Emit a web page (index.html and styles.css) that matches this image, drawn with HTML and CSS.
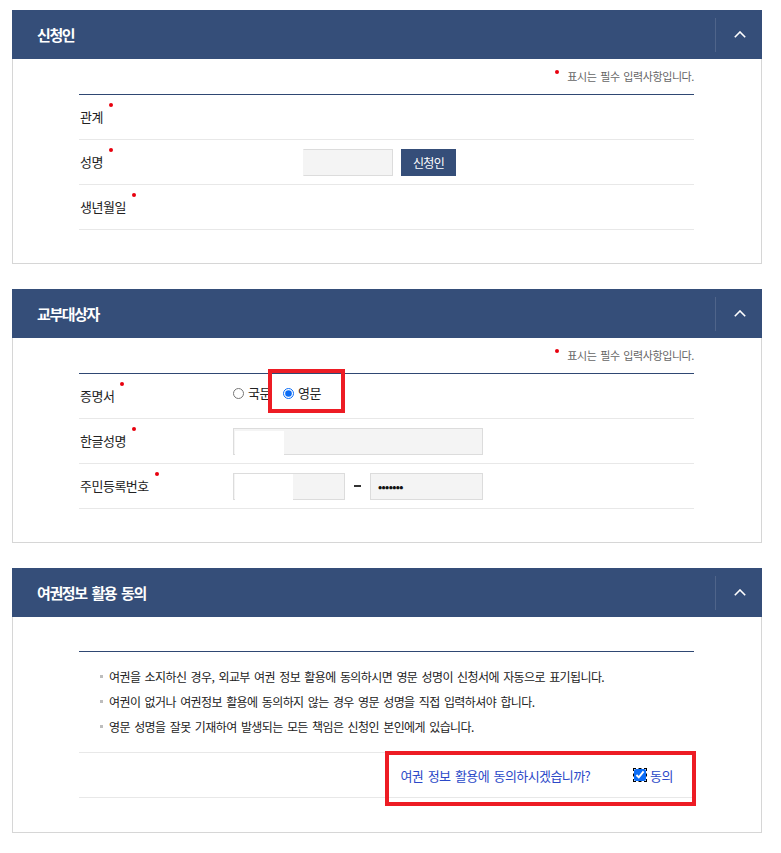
FILE: index.html
```html
<!DOCTYPE html>
<html lang="ko">
<head>
<meta charset="utf-8">
<title>신청서</title>
<link rel="stylesheet" href="styles.css">
</head>
<body>
<div class="page">
  <section class="panel">
    <div class="panel-head">
      <h2 class="panel-title">신청인</h2>
      <span class="toggle"><svg width="12" height="7" viewBox="0 0 12 7"><polyline points="0.8,6.2 6,1 11.2,6.2" fill="none" stroke="#fff" stroke-width="1.6"/></svg></span>
    </div>
    <div class="panel-body">
      <p class="req-note"><span class="dot-mark"></span>표시는 필수 입력사항입니다.</p>
      <div class="form-table">
        <div class="row"><div class="label"><span class="req">관계</span></div><div class="field"></div></div>
        <div class="row"><div class="label"><span class="req">성명</span></div><div class="field"><span class="input input-applicant"></span><span class="btn">신청인</span></div></div>
        <div class="row"><div class="label"><span class="req">생년월일</span></div><div class="field"></div></div>
      </div>
    </div>
  </section>

  <section class="panel">
    <div class="panel-head">
      <h2 class="panel-title">교부대상자</h2>
      <span class="toggle"><svg width="12" height="7" viewBox="0 0 12 7"><polyline points="0.8,6.2 6,1 11.2,6.2" fill="none" stroke="#fff" stroke-width="1.6"/></svg></span>
    </div>
    <div class="panel-body">
      <p class="req-note"><span class="dot-mark"></span>표시는 필수 입력사항입니다.</p>
      <div class="form-table">
        <div class="row"><div class="label"><span class="req">증명서</span></div>
          <div class="field radios">
            <label class="radio"><input type="radio" name="cert">국문</label>
            <label class="radio"><input type="radio" name="cert" checked>영문</label>
          </div>
        </div>
        <div class="row"><div class="label"><span class="req">한글성명</span></div>
          <div class="field"><span class="input input-wide"><span class="mask mask-a"></span></span></div>
        </div>
        <div class="row"><div class="label"><span class="req">주민등록번호</span></div>
          <div class="field"><span class="input input-half"><span class="mask mask-b"></span></span><span class="dash"></span><span class="input input-half input-pw">•••••••</span></div>
        </div>
      </div>
    </div>
  </section>

  <section class="panel">
    <div class="panel-head">
      <h2 class="panel-title">여권정보 활용 동의</h2>
      <span class="toggle"><svg width="12" height="7" viewBox="0 0 12 7"><polyline points="0.8,6.2 6,1 11.2,6.2" fill="none" stroke="#fff" stroke-width="1.6"/></svg></span>
    </div>
    <div class="panel-body body-3">
      <div class="form-table">
        <ul class="notes">
          <li>여권을 소지하신 경우, 외교부 여권 정보 활용에 동의하시면 영문 성명이 신청서에 자동으로 표기됩니다.</li>
          <li>여권이 없거나 여권정보 활용에 동의하지 않는 경우 영문 성명을 직접 입력하셔야 합니다.</li>
          <li>영문 성명을 잘못 기재하여 발생되는 모든 책임은 신청인 본인에게 있습니다.</li>
        </ul>
        <div class="agree-row">
          <span class="agree-q">여권 정보 활용에 동의하시겠습니까?</span>
          <label class="agree-check"><input type="checkbox" checked>동의</label>
        </div>
      </div>
    </div>
  </section>
</div>
<div class="mark mark-1"></div>
<div class="mark mark-2"></div>
</body>
</html>
```

FILE: styles.css
```css
* { box-sizing: border-box; }
html, body { margin: 0; padding: 0; background: #fff; }
body {
  font-family: "Noto Sans CJK KR", "Noto Sans", sans-serif;
  color: #222;
  position: relative;
}
.page { padding: 10px 0 0 12px; }
.panel { width: 750px; margin-bottom: 25px; }
.panel-head {
  height: 49px;
  background: #354e79;
  display: flex;
  align-items: center;
  padding-left: 25px;
}
.panel-title {
  margin: 0;
  color: #fff;
  font-size: 15px;
  font-weight: 700;
  letter-spacing: -1.4px;
  word-spacing: 2px;
  line-height: 20px;
}
.toggle {
  margin-left: auto;
  width: 47px;
  height: 34px;
  border-left: 1px solid rgba(255,255,255,0.13);
  display: flex;
  align-items: center;
  justify-content: center;
}
.toggle svg { display: block; margin-left: 1px; }
.panel-body {
  border: 1px solid #d6d6d6;
  border-top: 0;
  padding: 0 67px 33px 66px;
}
.body-3 { padding-top: 34px; padding-bottom: 34px; }
.req-note {
  margin: 0;
  height: 35px;
  line-height: 35px;
  text-align: right;
  font-size: 11px;
  color: #666;
  letter-spacing: -0.4px;
  word-spacing: 1px;
}
.dot-mark {
  display: inline-block;
  width: 4px;
  height: 4px;
  border-radius: 50%;
  background: #e8000e;
  vertical-align: 7px;
  margin-right: 8px;
}
.form-table { border-top: 1px solid #2f4873; }
.row {
  height: 45px;
  border-bottom: 1px solid #e8e8e8;
  display: flex;
  align-items: center;
}
.label { width: 154px; padding-left: 1px; font-size: 13px; letter-spacing: -0.5px; line-height: 18px; }
.req { position: relative; }
.req::after {
  content: "";
  position: absolute;
  right: -10px;
  top: -4px;
  width: 4px;
  height: 4px;
  border-radius: 50%;
  background: #e8000e;
}
.field { display: flex; align-items: center; }
.input {
  display: block;
  position: relative;
  height: 27px;
  background: #f4f4f4;
  border: 1px solid #dcdcdc;
}
.input-applicant { width: 90px; margin-left: 70px; border-left-color: #f4f4f4; }
.btn {
  display: block;
  margin-left: 8px;
  width: 55px;
  height: 27px;
  background: #354e79;
  color: #fff;
  font-size: 12px;
  letter-spacing: -0.7px;
  line-height: 27px;
  text-align: center;
}
.input-wide { width: 250px; }
.input-half { width: 112px; }
.input-pw {
  width: 113px;
  font-size: 11px;
  font-weight: 700;
  line-height: 24px;
  letter-spacing: -0.6px;
  padding-left: 7px;
  color: #111;
}
.dash { display: block; width: 7px; height: 2px; background: #333; margin: 0 9px; }
.mask { position: absolute; background: #fff; }
.mask-a { left: 1px; top: 2px; width: 49px; bottom: -1px; }
.mask-b { left: 1px; top: 0; width: 58px; bottom: -1px; }
.radios { gap: 12px; margin-top: -6px; }
.radio {
  display: flex;
  align-items: center;
  font-size: 13px;
  letter-spacing: -0.5px;
  line-height: 18px;
}
.radio input {
  width: 11px;
  height: 11px;
  margin: 0 4px 0 0;
  accent-color: #0b6cf5;
}
.notes {
  list-style: none;
  margin: 0;
  padding: 12px 0 13px 21px;
  border-bottom: 1px solid #e8e8e8;
}
.notes li {
  position: relative;
  padding-left: 9px;
  font-size: 12px;
  line-height: 25px;
  letter-spacing: -0.6px;
  word-spacing: 1.5px;
  color: #222;
}
.notes li::before {
  content: "";
  position: absolute;
  left: 0;
  top: 11px;
  width: 3px;
  height: 3px;
  background: #bdbdbd;
}
.agree-row {
  height: 45px;
  border-bottom: 1px solid #e8e8e8;
  display: flex;
  align-items: center;
  justify-content: flex-end;
  padding-right: 21px;
  color: #2b49c8;
  font-size: 13px;
  letter-spacing: -0.6px;
  word-spacing: 1.5px;
}
.agree-q { margin-right: 44px; }
.agree-check { display: flex; align-items: center; font-size: 13px; letter-spacing: -0.5px; }
.agree-check input {
  width: 12px;
  height: 12px;
  margin: 0 4px 0 0;
  accent-color: #0b6cf5;
  outline: 1px dashed #000;
  outline-offset: 0;
}
.mark {
  position: absolute;
  border: 4px solid #ed1c24;
  pointer-events: none;
}
.mark-1 { left: 268px; top: 369px; width: 77px; height: 44px; }
.mark-2 { left: 385px; top: 751px; width: 311px; height: 55px; }
```
